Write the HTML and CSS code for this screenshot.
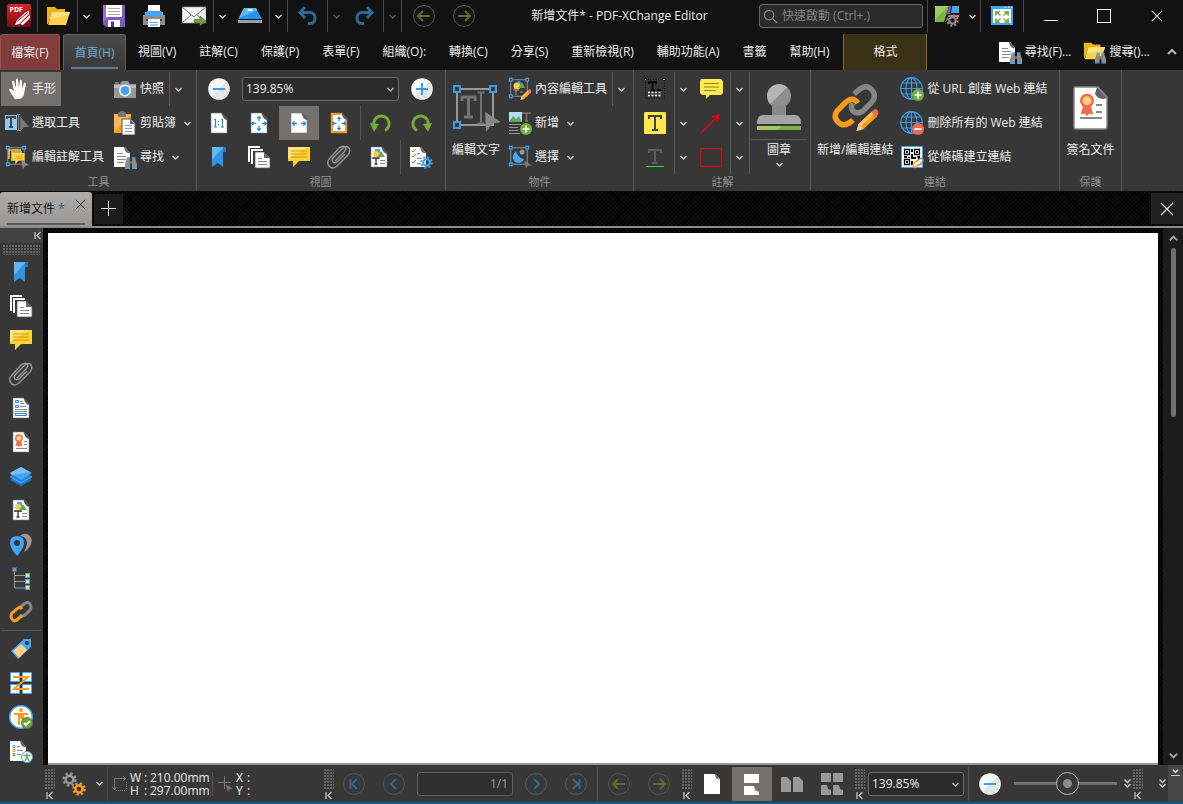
FILE: index.html
```html
<!DOCTYPE html>
<html lang="zh-Hant">
<head>
<meta charset="utf-8">
<title>新增文件* - PDF-XChange Editor</title>
<link rel="stylesheet" href="styles.css">
</head>
<body>
<svg class="defs" aria-hidden="true">
  <defs>
    <linearGradient id="g-red" x1="0" y1="0" x2="0" y2="1"><stop offset="0" stop-color="#d8262b"/><stop offset="1" stop-color="#7a0c10"/></linearGradient>
    <linearGradient id="g-gray" x1="0" y1="0" x2="1" y2="1"><stop offset=".5" stop-color="#b5b5b5"/><stop offset=".5" stop-color="#8f8f8f"/></linearGradient>
  </defs>
  <symbol id="chev" viewBox="0 0 9 9"><path d="M1.500 3l3 3 3-3" fill="none" stroke="currentColor" stroke-width="1.500"/></symbol>
  <symbol id="dchev" viewBox="0 0 9 11"><path d="M1.500 1.500l3 3 3-3M1.500 6l3 3 3-3" fill="none" stroke="#ccc" stroke-width="1.500"/></symbol>
  <symbol id="collapse" viewBox="0 0 9 9"><path d="M2 1v7M7.500 1L4 4.500 7.500 8M4 4.500h1" fill="none" stroke="#c4c4c4" stroke-width="1.300"/></symbol>
  <symbol id="doc" viewBox="0 0 24 24"><path d="M4 2h11l5 6v14H4z" fill="#fff" stroke="#777" stroke-width=".6"/><path d="M14.500 2h1l5 6v1c-3 0-5-3-6-7z" fill="#555"/></symbol>
  <symbol id="logo" viewBox="0 0 24 24"><rect width="24" height="23" rx="2" fill="url(#g-red)"/><text x="2.500" y="8" class="logo-text">PDF</text><path d="M8 21l2-5L19 8l3-1v3L12 20zM13 20L23 11v3l-7 7z" fill="#fff"/><path d="M10 17.500l11-9" stroke="#a0161a"/></symbol>
  <symbol id="folder" viewBox="0 0 24 24"><path d="M1 3h8l2 2h8v4H6L2 20H1z" fill="#e9b21e"/><path d="M6 8h18l-4 13H2z" fill="#ffd04a"/><path d="M6 8h18l-1 3L4 15z" fill="#ffe07a"/></symbol>
  <symbol id="save" viewBox="0 0 24 24"><path d="M1 1h22v22H4l-3-3z" fill="#7e57c2"/><path d="M1 1h22L1 18z" fill="#9575cd"/><path d="M4 1h16v12H4z" fill="#fff"/><path d="M6 4.500h12M6 7.500h12M6 10.500h12" stroke="#aaa" stroke-width="1.200"/><path d="M6 16h12v7H6z" fill="#fff"/><path d="M9 17.500h3V23H9z" fill="#512da8"/></symbol>
  <symbol id="print" viewBox="0 0 24 24"><path d="M1 11h22v10H1z" fill="#8d8d8d"/><path d="M6 1h12v8H6z" fill="#fff"/><path d="M3 8h18v4H3z" fill="#aaa"/><path d="M5 7h14l2 5H3z" fill="#42a5f5"/><path d="M4 15h16v2H4z" fill="#444"/><path d="M6 15h12v8H6z" fill="#fff"/><path d="M8 18.500h8M8 21h8" stroke="#42a5f5"/></symbol>
  <symbol id="mail" viewBox="0 0 24 24"><path d="M0 3h24v16H0z" fill="#f4f4f4" stroke="#999" stroke-width=".7"/><path d="M0 3l12 10L24 3M0 19l9-8M24 19l-9-8" stroke="#777" fill="none"/><path d="M12 15.500h6V12l6 5-6 5v-3.500h-6z" fill="#6ba534" stroke="#444" stroke-width=".5"/></symbol>
  <symbol id="scan" viewBox="0 0 24 24"><path d="M6 4h12l6 11H0z" fill="#2196f3"/><path d="M6 4h12l1 2L1 14z" fill="#64b5f6"/><path d="M10 5h4l1 2H9z" fill="#e3f2fd"/><path d="M0 16h24v3H0z" fill="#9e9e9e"/></symbol>
  <symbol id="undo" viewBox="0 0 24 24"><path d="M9 3L4 8.500 9 14M5 8.500h9a5 5 0 0 1 5 5q0 6-5 6h-2" fill="none" stroke="#2d6898" stroke-width="3"/></symbol>
  <symbol id="back" viewBox="0 0 24 24"><circle cx="12" cy="12" r="10.500" fill="none" stroke="#555"/><path d="M11 7l-5 5 5 5M6 12h12" fill="none" stroke="#55722f" stroke-width="2"/></symbol>
  <symbol id="first" viewBox="0 0 24 24"><circle cx="12" cy="12" r="10.500" fill="none" stroke="#555"/><path d="M15 7l-5 5 5 5M8.500 7v10" fill="none" stroke="#39658d" stroke-width="2"/></symbol>
  <symbol id="prev" viewBox="0 0 24 24"><circle cx="12" cy="12" r="10.500" fill="none" stroke="#555"/><path d="M14 7l-5 5 5 5" fill="none" stroke="#39658d" stroke-width="2"/></symbol>
  <symbol id="glass" viewBox="0 0 16 16"><circle cx="6.500" cy="6.500" r="5" fill="none" stroke="#888" stroke-width="1.300"/><path d="M10 10l5 5" stroke="#888" stroke-width="1.500"/></symbol>
  <symbol id="gear" viewBox="0 0 24 24"><circle cx="12" cy="12" r="6" fill="none" stroke="currentColor" stroke-width="4"/><circle cx="12" cy="12" r="9.500" fill="none" stroke="currentColor" stroke-width="4" stroke-dasharray="3.730 3.730"/></symbol>
  <symbol id="theme" viewBox="0 0 24 24"><path d="M0 2h14L9 18H0z" fill="#7cb342"/><path d="M0 2h13L0 16z" fill="#9ccc65"/><path d="M14 2h2l-1 8h-3z" fill="#7e57c2"/><path d="M17 2h7v7h-8z" fill="#42a5f5"/><path d="M14 11h10v2H13l-2 5h-1z" fill="#ff7043"/><use href="#gear" x="11" y="10" width="13" height="13" color="#8a8a8a"/></symbol>
  <symbol id="full" viewBox="0 0 24 24"><path d="M2 3h20v17H2z" fill="#fff" stroke="#42a5f5" stroke-width="2"/><path d="M1 2h22v3H1z" fill="#42a5f5"/><path d="M15 3.500h1M18 3.500h1M21 3.500h1" stroke="#fff"/><path d="M5 7h5L9 9l2 2-1 1-2-2-3 2zM19 7h-5l1 2-2 2 1 1 2-2 3 2zM5 19h5l-1-2 2-2-1-1-2 2-3-2zM19 19h-5l1-2-2-2 1-1 2 2 3-2z" fill="#7cb342"/></symbol>
  <symbol id="bino" viewBox="0 0 12 12"><path d="M1 4l1-3h3v10H0V7zM11 4l-1-3H7v10h5V7z" fill="#8d8d8d"/><path d="M5 4h2v3H5z" fill="#666"/><path d="M1.500 1H5M7 1h3.500M0 11.300h5M7 11.300h5" stroke="#42a5f5" stroke-width="1.400"/></symbol>
  <symbol id="find" viewBox="0 0 24 24"><path d="M1 2h11l5 6v14H1z" fill="#fff"/><path d="M11 2h1l5 6c-3 1-5-1-6-6z" fill="#666"/><path d="M4 8.500h6M4 11.500h9M4 14.500h9M4 17.500h7" stroke="#888"/><use href="#bino" x="12" y="12" width="12" height="12"/></symbol>
  <symbol id="search" viewBox="0 0 24 24"><use href="#folder" width="24" height="22"/><use href="#bino" x="13" y="12" width="11" height="12"/></symbol>
  <symbol id="hand" viewBox="0 0 24 24"><path d="M10 22Q7 18 4 13q0-2 2-1l3 2L7 5q0-2 2-1l2 7V2q1-1 2 0l1 9 1-8q1-1 2 1v8l2-6q1-1 2 1l-2 10q-1 5-6 5z" fill="#fff"/></symbol>
  <symbol id="seltext" viewBox="0 0 24 24"><path d="M0 4h12v15H0z" fill="#90caf9"/><path d="M2 8V6h8v2M6 6v10M4 16h4" stroke="#444" stroke-width="2" fill="none"/><path d="M12 3.500h3M12 19.500h3M13.500 4v15" stroke="#888"/><path d="M15 5l9 11h-5l-4 5z" fill="#777"/></symbol>
  <symbol id="bubble" viewBox="0 0 24 24"><path d="M1 2h22v14H12l-6 6v-6H1z" fill="#fdd13d"/><path d="M1 2h20L1 14z" fill="#ffe17a"/><path d="M4 6h16M4 9h16M4 12h16" stroke="#d69a00"/></symbol>
  <symbol id="frame" viewBox="0 0 24 24"><path d="M3 3h18v18H3z" fill="none" stroke="#999"/><path d="M1.500 1.500h3v3h-3zM19.500 1.500h3v3h-3zM1.500 19.500h3v3h-3z" fill="#333" stroke="#42a5f5" stroke-width="1.200"/></symbol>
  <symbol id="selnote" viewBox="0 0 24 24"><use href="#frame" width="22" height="22"/><path d="M4 14V5h12M7 16V7h10" fill="none" stroke="#fdd13d" stroke-width="1.500"/><use href="#bubble" x="7" y="7" width="13" height="13"/><path d="M16 15l8 5-4 1-2 3z" fill="#888"/></symbol>
  <symbol id="camera" viewBox="0 0 24 24"><path d="M1 7h6l2-3h6l2 3h6v14H1z" fill="#999"/><path d="M1 8h22v3H1z" fill="#bbb"/><path d="M2 5h4v2H2z" fill="#777"/><circle cx="12" cy="13.500" r="6" fill="#fff"/><circle cx="12" cy="13.500" r="4.500" fill="#42a5f5"/></symbol>
  <symbol id="paste" viewBox="0 0 24 24"><path d="M1 3h17v19H1z" fill="#ffb74d"/><path d="M1 21L18 4v18H1z" fill="#fb9a1b"/><path d="M5 2q4-4 8 0v4H5z" fill="#777"/><path d="M9 8h9l4 4v12H9z" fill="#fff" stroke="#555"/><path d="M17 8l5 5h-5z" fill="#666"/><path d="M12 14.500h7M12 17.500h7M12 20.500h7" stroke="#999"/></symbol>
  <symbol id="minus" viewBox="0 0 24 24"><circle cx="12" cy="12" r="10.800" fill="#f7f7f7"/><path d="M19.600 4.400A10.800 10.800 0 0 1 4.400 19.600z" fill="#e6e6e6"/><path d="M6 12h12" stroke="#2196f3" stroke-width="1.800"/></symbol>
  <symbol id="plus" viewBox="0 0 24 24"><use href="#minus" width="24" height="24"/><path d="M12 6v12" stroke="#2196f3" stroke-width="1.800"/></symbol>
  <symbol id="actual" viewBox="0 0 24 24"><use href="#doc" width="24" height="24"/><path d="M7 9l1.500-1v8M7 16h3M14 9l1.500-1v8M14 16h3M11.500 10v1M11.500 13v1" fill="none" stroke="#2389d8"/></symbol>
  <symbol id="arrows" viewBox="0 0 24 24"><path d="M12 5v5M12 15v5M4 12.500h5M15 12.500h5M10 7l2-2 2 2M10 18l2 2 2-2M6 10.500l-2 2 2 2M18 10.500l2 2-2 2" fill="none" stroke="#2389d8" stroke-width="1.400"/></symbol>
  <symbol id="fitpage" viewBox="0 0 24 24"><use href="#doc" width="24" height="24"/><use href="#arrows" x="1" y="1" width="22" height="22"/></symbol>
  <symbol id="fitwidth" viewBox="0 0 24 24"><use href="#doc" width="24" height="24"/><path d="M6 12.500h4M14 12.500h4M7.500 10.500l-2 2 2 2M16.500 10.500l2 2-2 2" fill="none" stroke="#2389d8" stroke-width="1.400"/></symbol>
  <symbol id="fitvis" viewBox="0 0 24 24"><use href="#doc" width="24" height="24"/><path d="M5.500 3h9M5 3v18h14V9" fill="none" stroke="#fb9a1b" stroke-width="2"/><use href="#arrows" x="2" y="2" width="20" height="20"/></symbol>
  <symbol id="rotate" viewBox="0 0 24 24"><path d="M16 19.500A7.700 7.700 0 1 0 5 15" fill="none" stroke="#76a83a" stroke-width="3"/><path d="M1 12l9 1-5 8z" fill="#76a83a"/></symbol>
  <symbol id="mark" viewBox="0 0 24 24"><path d="M5 2h14v5h-3v15l-5-4-6 4z" fill="#2f93e8"/><path d="M5 2h12L5 15z" fill="#64b5f6"/><path d="M16 2h3v5h-3z" fill="#1f7ccc"/></symbol>
  <symbol id="pages" viewBox="0 0 24 24"><path d="M2 17V2h11M5 19V5h11" fill="none" stroke="#fff" stroke-width="2"/><path d="M8 7h9l6 6v10H8z" fill="#fff" stroke="#555" stroke-width=".7"/><path d="M17 7l6 6h-6z" fill="#666"/><path d="M11 13.500h4M11 16.500h9M11 19.500h9" stroke="#888"/></symbol>
  <symbol id="clip" viewBox="0 0 24 24"><path d="M8 16L17 7q3-3 1-5t-6 1L3 13q-4 4-1 8t8 0L21 10q3-4 1-7t-6 0L7 12q-3 3-1 5t5-1l7-7" fill="none" stroke="#999" stroke-width="1.400"/></symbol>
  <symbol id="content" viewBox="0 0 24 24"><use href="#doc" width="24" height="24"/><path d="M8 4h5v4H8z" fill="#42a5f5"/><circle cx="9" cy="9" r="3" fill="#fdd13d"/><path d="M14 6l4 6h-8z" fill="#66a957"/><path d="M6 14v-1h6v1M9 13v6M7.500 19h3" fill="none" stroke="#333" stroke-width="1.300"/><path d="M13 15.500h5M13 18.500h5" stroke="#888"/></symbol>
  <symbol id="options" viewBox="0 0 24 24"><path d="M1 2h11l5 6v14H1z" fill="#fff"/><path d="M11 2h1l5 6c-3 1-5-1-6-6z" fill="#666"/><path d="M3 6l1 1 3-3M3 11l1 1 3-3M3 17l1 1 3-3" stroke="#ff5722" fill="none"/><path d="M8 8.500h3M8 13.500h5M8 18.500h4" stroke="#888"/><use href="#gear" x="11" y="11" width="13" height="13" color="#42a5f5"/></symbol>
  <symbol id="cursor" viewBox="0 0 12 12"><path d="M0 0l12 7-6 1-3 4z" fill="#777"/></symbol>
  <symbol id="edittext" viewBox="0 0 48 48"><path d="M5 5h36v36H5z" fill="none" stroke="#999" stroke-width="2"/><path d="M2 2h6v6H2zM38 2h6v6h-6zM2 38h6v6H2z" fill="#373737" stroke="#3d9be9" stroke-width="2"/><path d="M10 17v-4h13v4M16.500 13v20M12 33h9" fill="none" stroke="#747474" stroke-width="3"/><path d="M25.500 8.500h7M29 8.500v31M25.500 39.500h7" fill="none" stroke="#747474" stroke-width="2"/><path d="M33 28l16 10-9 2-6 8z" fill="#888"/></symbol>
  <symbol id="pencil" viewBox="0 0 24 24"><path d="M1 23l2-7L17 3l5 5L8 21z" fill="#fb9a1b"/><path d="M3 16L17 3l2 2L5 19z" fill="#ffc15a"/><path d="M16 4l3-3q4 0 4 5l-3 3z" fill="#f0645a"/><path d="M1 23l2-7 5 5z" fill="#e5c8a5"/></symbol>
  <symbol id="editcontent" viewBox="0 0 24 24"><use href="#frame" width="22" height="22"/><circle cx="9" cy="9" r="3.500" fill="#fdd13d"/><path d="M8 5l4-1 1 4z" fill="#42a5f5"/><path d="M14 5l3 6h-7z" fill="#66a957"/><path d="M5 13h6M8 13v5M12 15h3" stroke="#999"/><use href="#pencil" x="12" y="11" width="12" height="13"/></symbol>
  <symbol id="add" viewBox="0 0 12 12"><circle cx="6" cy="6" r="6" fill="#76ad3a"/><path d="M6 2.500v7M2.500 6h7" stroke="#fff" stroke-width="1.700"/></symbol>
  <symbol id="addobj" viewBox="0 0 24 24"><path d="M1 1h13v10H1z" fill="#b8ddf5"/><path d="M1 11l4-6 3 3 3-3 3 6z" fill="#66a957"/><path d="M15 3V2h7v1M18.500 2v8M17 10h3" stroke="#777" stroke-width="1.500" fill="none"/><path d="M1 13.500h12M1 16.500h9M1 19.500h9M1 22.500h11" stroke="#999"/><use href="#add" x="12" y="12" width="12" height="12"/></symbol>
  <symbol id="selobj" viewBox="0 0 24 24"><use href="#frame" width="22" height="22"/><circle cx="14" cy="7" r="2.500" fill="#999"/><path d="M8 6q-6 6-1 11 6 3 9-3-6-1-8-8z" fill="#42a5f5"/><use href="#cursor" x="16" y="15" width="8" height="9"/></symbol>
  <symbol id="typew" viewBox="0 0 24 24"><rect x="2.500" y="2.500" width="19" height="19" fill="none" stroke="#111" stroke-dasharray="1 1.500"/><circle cx="2.500" cy="2.500" r="1.200" fill="#fff" stroke="#000"/><circle cx="21" cy="2.500" r="1.200" fill="#fff" stroke="#000"/><path d="M6 7V5h7v2M9.500 5v8M8 13h4M14 13h4" fill="none" stroke="#000" stroke-width="1.700"/><path d="M5 15.500h14M5 18.500h14" stroke="#fff" stroke-width="1.500" stroke-dasharray="2 1.500"/></symbol>
  <symbol id="high" viewBox="0 0 24 24"><rect x="1" y="1" width="22" height="22" rx="1" fill="#ffe94d"/><path d="M6 8V5h12v3M12 5v14M9 19h6" stroke="#444" stroke-width="2" fill="none"/></symbol>
  <symbol id="under" viewBox="0 0 24 24"><path d="M6 8V5h12v3M12 5v13M9 18h6" stroke="#5c5c5c" stroke-width="2" fill="none"/><path d="M3 21.500h18" stroke="#0f2"/></symbol>
  <symbol id="sticky" viewBox="0 0 24 24"><path d="M2 2h20l2 2v12l-2 2H11l-4 4v-4H3l-2-2V4z" fill="#ffe94d"/><path d="M5 6.500h15M5 10h15M5 13.500h12" stroke="#8b8125"/></symbol>
  <symbol id="arrow" viewBox="0 0 24 24"><path d="M2 22L20 4M13 6l7-2-2 7" fill="none" stroke="#f00000" stroke-width="1.500"/></symbol>
  <symbol id="rect" viewBox="0 0 24 24"><rect x="1.500" y="3.500" width="21" height="18" fill="none" stroke="#f00000"/></symbol>
  <symbol id="stamp" viewBox="0 0 48 48"><circle cx="24" cy="12" r="12" fill="url(#g-gray)"/><path d="M17 22h14v10h9q6 0 6 8H2q0-8 6-8h9z" fill="#898989"/><path d="M8 31h32q6 0 6 9H2q0-9 6-9z" fill="#a4a4a4"/><path d="M2 42h44v4H2z" fill="#7cb342"/><path d="M2 42h25l-5 4H2z" fill="#9ccc65"/></symbol>
  <symbol id="link" viewBox="0 0 24 24"><g fill="none" stroke-width="3"><path d="M10 8l5-4q4-3 6 0t0 6l-5 5q-3 2-5 0" stroke="#888"/><path d="M8 20q-3 2-5-1t0-6l5-4q3-3 5 0" stroke="#fb9a1b"/><path d="M7 20.500l6-5" stroke="#fb9a1b"/></g></symbol>
  <symbol id="editlink" viewBox="0 0 48 48"><g fill="none" stroke-width="5.500"><path d="M23 10l6-5q7-5 12 1t0 12l-9 9q-6 4-10 0-3-4 0-8" stroke="#858585"/><path d="M18 39q-6 4-11-1t-1-11l9-9q7-6 12 1" stroke="#fb9a1b"/><path d="M14 41q5-2 8-5" stroke="#fb9a1b"/></g><use href="#pencil" x="24" y="24" width="25" height="24"/></symbol>
  <symbol id="globe" viewBox="0 0 24 24"><g fill="none" stroke="#3d9be9" stroke-width="1.200"><circle cx="11.500" cy="11.500" r="10.800"/><ellipse cx="11.500" cy="11.500" rx="5.500" ry="10.800"/><path d="M11.500 1v21M1 11.500h21M3 6h17M3 17h17"/></g></symbol>
  <symbol id="globeadd" viewBox="0 0 24 24"><use href="#globe" width="24" height="24"/><use href="#add" x="12" y="12" width="12" height="12"/></symbol>
  <symbol id="globedel" viewBox="0 0 24 24"><use href="#globe" width="24" height="24"/><circle cx="18" cy="18" r="6" fill="#f4694a"/><path d="M14.500 18h7" stroke="#fff" stroke-width="2"/></symbol>
  <symbol id="qr" viewBox="0 0 24 24"><path d="M1.500 1.500h21v21h-21z" fill="#fff" stroke="#42a5f5"/><path d="M4.500 4.500h5v5h-5zM14.500 4.500h5v5h-5zM4.500 14.500h5v5h-5z" fill="none" stroke="#000" stroke-width="1.300"/><path d="M6 6h2v2H6zM16 6h2v2h-2zM6 16h2v2H6zM11 4h2v3h-2zM11 9h2v3h3v2h-5zM4 11h3v2H4zM8 12h2v1H8zM17 11h3v3h-2zM11 16h2v4h-2z"/><use href="#link" x="12" y="12" width="12" height="12"/></symbol>
  <symbol id="ribbonmark" viewBox="0 0 12 18"><path d="M3 10l-2 7 3-1 2 2V11v7l2-2 3 1-2-7z" fill="#f4694a"/><circle cx="6" cy="6" r="4.500" fill="#ffd27a" stroke="#f4694a" stroke-width="2"/></symbol>
  <symbol id="sign" viewBox="0 0 48 48"><path d="M8 3h23l9 10v30q0 2-2 2H9q-2 0-2-2V5q0-2 1-2z" fill="#fff" stroke="#888" stroke-width="1.500"/><path d="M30 3l10 11q-8 3-12-4z" fill="#616161"/><use href="#ribbonmark" x="11" y="9" width="18" height="23"/><path d="M29 21h6M29 28h6M13 34h22" stroke="#888" stroke-width="2"/></symbol>
  <symbol id="fields" viewBox="0 0 24 24"><use href="#doc" width="24" height="24"/><path d="M6.500 4.500h3v2h-3zM6.500 9.500h3v2h-3zM6.500 17.500h11v2h-11z" fill="none" stroke="#2389d8"/><path d="M11 5.500h3M11 7.500h4M11 10.500h6M6 13.500h12M6 15.500h12" stroke="#888"/></symbol>
  <symbol id="sigs" viewBox="0 0 24 24"><use href="#doc" width="24" height="24"/><use href="#ribbonmark" x="5" y="4" width="10" height="13"/><path d="M15 11.500h3M15 14.500h3M7 18.500h11" stroke="#888"/></symbol>
  <symbol id="layers" viewBox="0 0 24 24"><path d="M1 16l11-7 11 7-11 6z" fill="#1976d2"/><path d="M1 13l11-7 11 7-11 6z" fill="#2389e0" stroke="#90caf9" stroke-width=".5"/><path d="M1 9l11-6 11 6-11 7z" fill="#42a5f5"/><path d="M1 9l11-6 9 5-18 3z" fill="#78bff7"/></symbol>
  <symbol id="pins" viewBox="0 0 24 24"><path d="M11 4q4-4 9-1 5 4 1 11-2 4-6 6 3-6 3-9 0-6-7-7z" fill="#999"/><path d="M1 11q0-7 7-7t7 7q0 5-7 13Q1 16 1 11z" fill="#42a5f5"/><circle cx="8" cy="11" r="3" fill="#373737"/></symbol>
  <symbol id="tree" viewBox="0 0 24 24"><path d="M5.500 4v18h12M5.500 9.500h12M5.500 15.500h12" fill="none" stroke="#999"/><path d="M3.500 1.500h4v4h-4z" fill="#f4694a" stroke="#1976d2"/><path d="M16.500 7.500h4v4h-4zM16.500 13.500h4v4h-4zM16.500 19.500h4v4h-4z" fill="#ffe04d" stroke="#42a5f5"/></symbol>
  <symbol id="tag" viewBox="0 0 24 24"><path d="M2 14L15 2h7v8L9 22z" fill="#42a5f5"/><path d="M4 14l8-7 6 6-8 8z" fill="#ffd08a"/><circle cx="18" cy="6" r="2" fill="#333"/></symbol>
  <symbol id="order" viewBox="0 0 24 24"><path d="M1.500 1.500h9v9h-9zM13.500 1.500h9v9h-9zM1.500 13.500h9v9h-9zM13.500 13.500h9v9h-9z" fill="#fff" stroke="#42a5f5"/><path d="M4 6h15L5 18h15" fill="none" stroke="#fb9a1b" stroke-width="2"/></symbol>
  <symbol id="access" viewBox="0 0 24 24"><circle cx="12" cy="12" r="11.300" fill="#fff" stroke="#42a5f5" stroke-width="1.400"/><circle cx="12" cy="5" r="2" fill="#fb9a1b"/><path d="M5 9h14M12 9v5M10 9v11M14 9v7" stroke="#fb9a1b" stroke-width="2"/><circle cx="18" cy="18" r="5.700" fill="#6ba534" stroke="#555" stroke-width=".6"/><path d="M15 18l2 2 4-4" fill="none" stroke="#fff" stroke-width="1.800"/></symbol>
  <symbol id="report" viewBox="0 0 24 24"><path d="M1 2h11l5 6v14H1z" fill="#fff"/><path d="M11 2h1l5 6c-3 1-5-1-6-6z" fill="#666"/><path d="M4 6.500h2v2H4z" fill="none" stroke="#42a5f5"/><path d="M4 10.500h2v2H4z" fill="none" stroke="#fb9a1b"/><path d="M4 14.500h2v2H4z" fill="none" stroke="#6ba534"/><path d="M8 7.500h3M8 11.500h6M8 15.500h4" stroke="#888"/><circle cx="18" cy="18" r="5.500" fill="#fff" stroke="#42a5f5"/><path d="M14.500 16.500h7M18 14v4l-2 4M18 18l2 4" stroke="#4caf50" fill="none" stroke-width="1.300"/></symbol>
  <symbol id="gears" viewBox="0 0 24 24"><use href="#gear" width="15" height="15" color="#999"/><use href="#gear" x="10" y="10" width="14" height="14" color="#f9a01b"/></symbol>
  <symbol id="dims" viewBox="0 0 16 16"><path d="M2.500 14V2.500H14M11 .500l3 2-3 2M.500 11l2 3 2-3" fill="none" stroke="#777"/><path d="M4 14.500h10.500V5" fill="none" stroke="#777" stroke-dasharray="1 1"/></symbol>
  <symbol id="cross" viewBox="0 0 16 16"><path d="M6.500 0v13M0 6.500h13" stroke="#777"/><use href="#cursor" x="8" y="8" width="7" height="8"/></symbol>
  <symbol id="l-single" viewBox="0 0 24 24"><path d="M4 2h11l5 5v15H4z" fill="#fff"/><path d="M15 2l5 6-4-2z" fill="#555"/></symbol>
  <symbol id="l-cont" viewBox="0 0 24 24"><path d="M4 2h15v9H4zM4 14h10l1 4 4 2v3H4z" fill="#fff"/></symbol>
  <symbol id="l-two" viewBox="0 0 24 24"><path d="M1 5h6l4 4v11H1zM13 5h6l4 4v11H13z" fill="#999"/></symbol>
  <symbol id="l-grid" viewBox="0 0 24 24"><path d="M1 1h10v9H1zM13 1h10v9H13zM1 13h6l1 4 3 1v5H1zM13 13h6l1 4 3 1v5H13z" fill="#999"/></symbol>
  <symbol id="x" viewBox="0 0 14 14"><path d="M1 1l12 12M13 1L1 13" stroke="currentColor" stroke-width="1.200"/></symbol>
</svg>

<header class="titlebar">
  <span class="tb logo-cell sep"><svg class="i"><use href="#logo"/></svg></span>
  <button class="tb sep" aria-label="開啟"><svg class="i"><use href="#folder"/></svg></button>
  <button class="drop" aria-label="更多開啟"><svg><use href="#chev"/></svg></button>
  <button class="tb" aria-label="儲存"><svg class="i"><use href="#save"/></svg></button>
  <button class="tb" aria-label="列印"><svg class="i"><use href="#print"/></svg></button>
  <button class="tb sep" aria-label="郵件"><svg class="i"><use href="#mail"/></svg></button>
  <button class="drop" aria-label="更多郵件"><svg><use href="#chev"/></svg></button>
  <button class="tb sep" aria-label="掃描"><svg class="i"><use href="#scan"/></svg></button>
  <button class="drop wide sep" aria-label="更多掃描"><svg><use href="#chev"/></svg></button>
  <button class="tb sep" aria-label="復原"><svg class="i"><use href="#undo"/></svg></button>
  <button class="drop dim" aria-label="更多復原"><svg><use href="#chev"/></svg></button>
  <button class="tb sep" aria-label="重做"><svg class="i flip"><use href="#undo"/></svg></button>
  <button class="drop wide dim sep" aria-label="更多重做"><svg><use href="#chev"/></svg></button>
  <div class="history">
    <button class="tb" aria-label="上一檢視"><svg class="i"><use href="#back"/></svg></button>
    <button class="tb" aria-label="下一檢視"><svg class="i flip"><use href="#back"/></svg></button>
  </div>
  <h1 class="title">新增文件* - PDF-XChange Editor</h1>
  <label class="quick"><svg><use href="#glass"/></svg><input type="text" placeholder="快速啟動 (Ctrl+.)" aria-label="快速啟動"></label>
  <button class="tb theme sepl" aria-label="佈景主題"><svg class="i"><use href="#theme"/></svg></button>
  <button class="drop sep" aria-label="更多佈景主題"><svg><use href="#chev"/></svg></button>
  <button class="tb sep full" aria-label="全螢幕"><svg class="i"><use href="#full"/></svg></button>
  <button class="win" aria-label="最小化"><span class="min"></span></button>
  <button class="win" aria-label="最大化"><span class="max"></span></button>
  <button class="win" aria-label="關閉"><svg><use href="#x"/></svg></button>
</header>

<nav class="tabs">
  <button class="tab file">檔案(F)</button>
  <button class="tab home">首頁(H)</button>
  <button class="tab">視圖(V)</button>
  <button class="tab">註解(C)</button>
  <button class="tab">保護(P)</button>
  <button class="tab">表單(F)</button>
  <button class="tab">組織(O):</button>
  <button class="tab">轉換(C)</button>
  <button class="tab">分享(S)</button>
  <button class="tab">重新檢視(R)</button>
  <button class="tab">輔助功能(A)</button>
  <button class="tab">書籤</button>
  <button class="tab">幫助(H)</button>
  <button class="tab format">格式</button>
  <span class="grow"></span>
  <button class="tool"><svg class="i"><use href="#find"/></svg>尋找(F)...</button>
  <button class="tool"><svg class="i"><use href="#search"/></svg>搜尋()...</button>
  <button class="fold" aria-label="收合功能區"><svg><use href="#chev"/></svg></button>
</nav>

<section class="ribbon">
  <div class="group tools">
    <div class="body">
      <div class="col first">
        <button class="item on"><svg class="i"><use href="#hand"/></svg>手形</button>
        <button class="item"><svg class="i"><use href="#seltext"/></svg>選取工具</button>
        <button class="item"><svg class="i"><use href="#selnote"/></svg>編輯註解工具</button>
      </div>
      <div class="col">
        <div class="row"><button class="item sep"><svg class="i"><use href="#camera"/></svg>快照</button><button class="drop" aria-label="更多快照"><svg><use href="#chev"/></svg></button></div>
        <button class="item"><svg class="i"><use href="#paste"/></svg>剪貼簿<svg class="c"><use href="#chev"/></svg></button>
        <button class="item"><svg class="i"><use href="#find"/></svg>尋找<svg class="c"><use href="#chev"/></svg></button>
      </div>
    </div>
    <h2>工具</h2>
  </div>
  <div class="group view">
    <div class="body rows">
      <div class="row">
        <button class="cell" aria-label="縮小"><svg class="i"><use href="#minus"/></svg></button>
        <label class="combo"><select aria-label="縮放"><option>139.85%</option></select><svg><use href="#chev"/></svg></label>
        <button class="cell" aria-label="放大"><svg class="i"><use href="#plus"/></svg></button>
      </div>
      <div class="row">
        <button class="cell" aria-label="實際大小"><svg class="i"><use href="#actual"/></svg></button>
        <button class="cell" aria-label="整頁"><svg class="i"><use href="#fitpage"/></svg></button>
        <button class="cell on" aria-label="頁寬"><svg class="i"><use href="#fitwidth"/></svg></button>
        <button class="cell" aria-label="可見內容"><svg class="i"><use href="#fitvis"/></svg></button>
        <span class="bar"></span>
        <button class="cell" aria-label="逆時針"><svg class="i"><use href="#rotate"/></svg></button>
        <button class="cell" aria-label="順時針"><svg class="i flip"><use href="#rotate"/></svg></button>
      </div>
      <div class="row">
        <button class="cell" aria-label="書籤"><svg class="i"><use href="#mark"/></svg></button>
        <button class="cell" aria-label="縮圖"><svg class="i"><use href="#pages"/></svg></button>
        <button class="cell" aria-label="註解"><svg class="i"><use href="#bubble"/></svg></button>
        <button class="cell" aria-label="附件"><svg class="i"><use href="#clip"/></svg></button>
        <button class="cell" aria-label="內容"><svg class="i"><use href="#content"/></svg></button>
        <span class="bar"></span>
        <button class="cell" aria-label="選項"><svg class="i"><use href="#options"/></svg></button>
      </div>
    </div>
    <h2>視圖</h2>
  </div>
  <div class="group objects">
    <div class="body">
      <button class="big"><svg class="b"><use href="#edittext"/></svg>編輯文字</button>
      <div class="col">
        <div class="row"><button class="item sep"><svg class="i"><use href="#editcontent"/></svg>內容編輯工具</button><button class="drop" aria-label="更多內容編輯"><svg><use href="#chev"/></svg></button></div>
        <button class="item"><svg class="i"><use href="#addobj"/></svg>新增<svg class="c"><use href="#chev"/></svg></button>
        <button class="item"><svg class="i"><use href="#selobj"/></svg>選擇<svg class="c"><use href="#chev"/></svg></button>
      </div>
    </div>
    <h2>物件</h2>
  </div>
  <div class="group notes">
    <div class="body">
      <div class="col">
        <div class="row"><button class="cell sep" aria-label="打字機"><svg class="i"><use href="#typew"/></svg></button><button class="drop" aria-label="更多打字機"><svg><use href="#chev"/></svg></button></div>
        <div class="row"><button class="cell sep" aria-label="螢光標示"><svg class="i"><use href="#high"/></svg></button><button class="drop" aria-label="更多螢光"><svg><use href="#chev"/></svg></button></div>
        <div class="row"><button class="cell sep" aria-label="底線"><svg class="i"><use href="#under"/></svg></button><button class="drop" aria-label="更多底線"><svg><use href="#chev"/></svg></button></div>
      </div>
      <div class="col">
        <div class="row"><button class="cell sep" aria-label="便箋"><svg class="i"><use href="#sticky"/></svg></button><button class="drop" aria-label="更多便箋"><svg><use href="#chev"/></svg></button></div>
        <div class="row"><button class="cell sep" aria-label="箭頭"><svg class="i"><use href="#arrow"/></svg></button><button class="drop" aria-label="更多箭頭"><svg><use href="#chev"/></svg></button></div>
        <div class="row"><button class="cell sep" aria-label="矩形"><svg class="i"><use href="#rect"/></svg></button><button class="drop" aria-label="更多矩形"><svg><use href="#chev"/></svg></button></div>
      </div>
      <span class="bar tall"></span>
      <div class="stamp">
        <button class="stamp-main" aria-label="套用圖章"><svg class="b"><use href="#stamp"/></svg></button>
        <button class="stamp-more">圖章<svg class="c"><use href="#chev"/></svg></button>
      </div>
    </div>
    <h2>註解</h2>
  </div>
  <div class="group links">
    <div class="body">
      <button class="big"><svg class="b"><use href="#editlink"/></svg>新增/編輯連結</button>
      <div class="col">
        <button class="item"><svg class="i"><use href="#globeadd"/></svg>從 URL 創建 Web 連結</button>
        <button class="item"><svg class="i"><use href="#globedel"/></svg>刪除所有的 Web 連結</button>
        <button class="item"><svg class="i"><use href="#qr"/></svg>從條碼建立連結</button>
      </div>
    </div>
    <h2>連結</h2>
  </div>
  <div class="group protect">
    <div class="body"><button class="big"><svg class="b"><use href="#sign"/></svg>簽名文件</button></div>
    <h2>保護</h2>
  </div>
</section>

<div class="doctabs">
  <div class="doctab"><span>新增文件 <b>*</b></span><button aria-label="關閉文件"><svg><use href="#x"/></svg></button></div>
  <button class="newtab" aria-label="新增分頁"></button>
  <span class="grow"></span>
  <button class="closeall" aria-label="關閉"><svg><use href="#x"/></svg></button>
</div>

<main class="work">
  <aside class="side">
    <button class="side-head" aria-label="收合側欄"><svg class="col-i"><use href="#collapse"/></svg></button>
    <div class="dots side-dots"></div>
    <button aria-label="書籤"><svg class="i"><use href="#mark"/></svg></button>
    <button aria-label="縮圖"><svg class="i"><use href="#pages"/></svg></button>
    <button aria-label="註解"><svg class="i"><use href="#bubble"/></svg></button>
    <button aria-label="附件"><svg class="i"><use href="#clip"/></svg></button>
    <button aria-label="欄位"><svg class="i"><use href="#fields"/></svg></button>
    <button aria-label="簽名"><svg class="i"><use href="#sigs"/></svg></button>
    <button aria-label="圖層"><svg class="i"><use href="#layers"/></svg></button>
    <button aria-label="內容"><svg class="i"><use href="#content"/></svg></button>
    <button aria-label="目的地"><svg class="i"><use href="#pins"/></svg></button>
    <button aria-label="結構"><svg class="i"><use href="#tree"/></svg></button>
    <button aria-label="連結"><svg class="i"><use href="#link"/></svg></button>
    <hr>
    <button aria-label="標籤"><svg class="i"><use href="#tag"/></svg></button>
    <button aria-label="順序"><svg class="i"><use href="#order"/></svg></button>
    <button aria-label="輔助功能檢查"><svg class="i"><use href="#access"/></svg></button>
    <button aria-label="輔助功能報告"><svg class="i"><use href="#report"/></svg></button>
  </aside>
  <div class="right">
    <div class="canvas">
      <div class="page"></div>
      <div class="scroll">
        <button class="up" aria-label="向上"><svg><use href="#chev"/></svg></button>
        <div class="track"><div class="thumb"></div></div>
        <button aria-label="向下"><svg><use href="#chev"/></svg></button>
      </div>
    </div>
    <footer class="status">
      <div class="part info">
        <span class="grip"><span class="dots"></span><svg class="col-i"><use href="#collapse"/></svg></span>
        <button class="gears" aria-label="設定"><svg class="i"><use href="#gears"/></svg></button>
        <button class="drop sep" aria-label="更多設定"><svg><use href="#chev"/></svg></button>
        <svg class="small"><use href="#dims"/></svg>
        <div class="size"><span>W</span><span>:</span><span>210.00mm</span><span>H</span><span>:</span><span>297.00mm</span></div>
        <span class="bar short"></span>
        <svg class="small"><use href="#cross"/></svg>
        <div class="pos"><span>X</span><span>:</span><span>Y</span><span>:</span></div>
      </div>
      <div class="part nav">
        <span class="grip"><span class="dots"></span><svg class="col-i"><use href="#collapse"/></svg></span>
        <button class="cell" aria-label="第一頁"><svg class="i"><use href="#first"/></svg></button>
        <button class="cell" aria-label="上一頁"><svg class="i"><use href="#prev"/></svg></button>
        <input class="pageno" type="text" value="1/1" aria-label="頁碼">
        <button class="cell" aria-label="下一頁"><svg class="i flip"><use href="#prev"/></svg></button>
        <button class="cell" aria-label="最後一頁"><svg class="i flip"><use href="#first"/></svg></button>
        <span class="bar"></span>
        <button class="cell" aria-label="上一檢視"><svg class="i"><use href="#back"/></svg></button>
        <button class="cell" aria-label="下一檢視"><svg class="i flip"><use href="#back"/></svg></button>
      </div>
      <div class="part layout">
        <span class="grip"><span class="dots"></span><svg class="col-i"><use href="#collapse"/></svg></span>
        <button class="cell" aria-label="單頁"><svg class="i"><use href="#l-single"/></svg></button>
        <button class="cell on" aria-label="連續"><svg class="i"><use href="#l-cont"/></svg></button>
        <button class="cell" aria-label="雙頁"><svg class="i"><use href="#l-two"/></svg></button>
        <button class="cell" aria-label="雙頁連續"><svg class="i"><use href="#l-grid"/></svg></button>
      </div>
      <div class="part zoom">
        <span class="grip"><span class="dots"></span><svg class="col-i"><use href="#collapse"/></svg></span>
        <label class="combo"><select aria-label="縮放比例"><option>139.85%</option></select><svg><use href="#chev"/></svg></label>
        <span class="bar"></span>
        <button class="cell" aria-label="縮小"><svg class="i"><use href="#minus"/></svg></button>
        <input class="slider" type="range" min="0" max="100" value="53" aria-label="縮放滑桿">
        <button class="more" aria-label="更多"><svg><use href="#dchev"/></svg></button>
      </div>
      <div class="part last">
        <span class="grip"><span class="dots"></span><svg class="col-i"><use href="#collapse"/></svg></span>
        <button class="more" aria-label="更多工具"><svg><use href="#dchev"/></svg></button>
      </div>
      <button class="corner" aria-label="選項"><svg><use href="#chev"/></svg></button>
    </footer>
  </div>
</main>
</body>
</html>
```
FILE: styles.css
```css
* { box-sizing: border-box; }
body {
  margin: 0;
  min-height: 100vh;
  display: flex;
  flex-direction: column;
  background: #121212;
  color: #ececec;
  font: 12px/16px "Open Sans", "Noto Sans CJK TC", sans-serif;
  border-bottom: 2px solid #0b5c94;
}
.defs { position: absolute; width: 0; height: 0; }
button {
  display: flex;
  align-items: center;
  justify-content: center;
  margin: 0;
  padding: 0;
  border: 0;
  background: none;
  color: inherit;
  font: inherit;
  white-space: nowrap;
}
svg { display: block; flex: none; overflow: visible; }
.i { width: 24px; height: 24px; }
.b { width: 48px; height: 48px; }
.c { width: 9px; height: 9px; margin-left: 4px; color: #c8c8c8; }
.flip { transform: scaleX(-1); }
.logo-text { font: bold 7px "Open Sans", sans-serif; fill: #fff; }
.grow { flex: 1; }
.sep { border-right: 1px solid #4a4a4a; }
.sepl { border-left: 1px solid #4a4a4a; }
.row { display: flex; height: 34px; align-items: center; }
.cell { width: 40px; height: 34px; flex: none; }
.on { background: #73706d; }
.bar { width: 1px; height: 34px; margin: 0 1px; flex: none; background: #585858; }
.drop { width: 16px; height: 32px; flex: none; color: #c8c8c8; }
.drop.wide { width: 18px; }
.drop.dim { color: #555; }
.drop svg { width: 9px; height: 9px; }

.titlebar { display: flex; height: 34px; align-items: flex-start; }
.tb { display: flex; align-items: center; justify-content: center; width: 40px; height: 32px; flex: none; }
.logo-cell { width: 38px; }
.history { display: flex; padding-left: 2px; }
.title { flex: 1; margin: 0; padding-right: 4px; font-size: 12px; font-weight: 400; line-height: 32px; text-align: center; white-space: nowrap; }
.quick {
  display: flex;
  align-items: center;
  gap: 4px;
  width: 164px;
  height: 24px;
  margin: 4px 4px 0 0;
  padding: 0 3px;
  border: 1px solid #696969;
  border-radius: 3px;
  background: #2b2b2b;
}
.quick svg { width: 15px; height: 15px; }
.quick input { flex: 1; min-width: 0; padding: 0; border: 0; background: none; color: #eee; font: inherit; }
.quick input::placeholder { color: #858585; }
.theme { width: 38px; }
.full { width: 43px; }
.win { width: 53px; height: 32px; }
.win svg { width: 12px; height: 12px; }
.min { width: 14px; height: 1px; margin-top: 9px; background: #eee; }
.max { width: 14px; height: 14px; border: 1px solid #eee; }

.tabs { display: flex; height: 36px; align-items: stretch; gap: 1px; }
.tab { padding: 0 11px; }
.file { width: 60px; margin-right: 2px; border-radius: 3px 3px 0 0; border: 1px solid #985050; border-bottom: 0; background: #833c3c; }
.home { width: 63px; border-radius: 3px 3px 0 0; border: 1px solid #606060; border-bottom: 0; background: linear-gradient(#4a4a4a, #383838); color: #72a9d6; position: relative; }
.home::after { content: ""; position: absolute; left: 7px; right: 7px; bottom: 1px; height: 2px; background: #5b7b98; }
.format { width: 84px; margin-left: 2px; border: 1px solid #8b6c20; border-width: 0 1px; background: #3b3117; }
.tool { gap: 3px; margin-right: 10px; }
.fold { width: 22px; }
.fold svg { width: 12px; height: 12px; transform: rotate(180deg); color: #bbb; }

.ribbon { display: flex; height: 121px; background: #373737; }
.group { display: flex; flex-direction: column; border-right: 1px solid #585858; flex: none; }
.group h2 { margin: 0; font-size: 11px; font-weight: 400; line-height: 16px; text-align: center; color: #929292; }
.body { display: flex; height: 104px; padding-top: 2px; }
.rows { flex-direction: column; }
.col { display: flex; flex-direction: column; align-items: flex-start; }
.item { height: 34px; padding: 0 5px 0 4px; gap: 3px; }
.ribbon .sep { border-color: #585858; }
.tools { width: 197px; padding-left: 1px; }
.tools .first { width: 110px; }
.view { width: 249px; padding: 0 3px 0 2px; }
.view .bar { margin-right: 0; }
.combo { position: relative; display: flex; height: 24px; }
.combo select {
  appearance: none;
  width: 100%;
  height: 24px;
  padding: 0 3px;
  border: 1px solid #696969;
  border-radius: 3px;
  background: #2b2b2b;
  color: #ececec;
  font: inherit;
}
.combo svg { position: absolute; right: 4px; top: 8px; width: 9px; height: 9px; color: #b0b0b0; pointer-events: none; }
.view .combo { flex: 1; margin: 0 3px; }
.big { flex-direction: column; justify-content: flex-start; gap: 10px; padding: 12px 6px 0; }
.objects { width: 188px; }
.objects .item { padding-left: 2px; }
.notes { width: 177px; padding-left: 1px; }
.notes .tall { height: 102px; margin: 0 1px 0 2px; }
.stamp { width: 56px; }
.stamp-main { width: 100%; height: 68px; border-bottom: 1px solid #585858; }
.stamp-main .b { margin-top: 4px; }
.stamp-more { width: 100%; flex-direction: column; gap: 2px; padding-top: 2px; }
.stamp-more .c { margin: 0; }
.links { width: 249px; }
.links .item { padding: 0 1px; }
.protect { width: 62px; }
.protect .big { width: 100%; }

.doctabs, .canvas {
  background-color: #0c0c0c;
  background-image: repeating-linear-gradient(45deg, #050505 0 1px, transparent 1px 3px), repeating-linear-gradient(-45deg, #050505 0 1px, transparent 1px 3px);
}
.doctabs { display: flex; height: 37px; align-items: center; border-bottom: 2px solid #8c8b89; }
.doctab {
  position: relative;
  display: flex;
  width: 92px;
  height: 34px;
  align-self: flex-end;
  padding-left: 7px;
  border-radius: 3px 3px 0 0;
  background: linear-gradient(#aeacaa, #989694);
  color: #161616;
  line-height: 34px;
}
.doctab b { color: #28598c; font-weight: 400; }
.doctab::after { content: ""; position: absolute; left: 7px; right: 7px; bottom: 1px; height: 2px; background: #5d5d5d; }
.doctab button { width: 20px; height: 24px; margin-left: auto; margin-right: 2px; }
.doctab svg { width: 11px; height: 11px; }
.newtab { width: 29px; height: 30px; margin-left: 2px; background: linear-gradient(#ddd, #ddd) center / 15px 1px no-repeat, linear-gradient(#ddd, #ddd) center / 1px 15px no-repeat, #1b1b1b; }
.closeall { width: 32px; height: 31px; background: #222; }
.closeall svg { width: 14px; height: 14px; }

.work { display: flex; flex: 1; }
.side { display: flex; flex-direction: column; width: 43px; flex: none; background: #373737; }
.side button { width: 42px; height: 34px; }
.side .side-head { width: 43px; height: 15px; justify-content: flex-end; padding-right: 1px; background: #424242; }
.side hr { width: 40px; height: 1px; margin: 1px; border: 0; background: #585858; }
.col-i { width: 9px; height: 9px; }
.dots { display: block; background: radial-gradient(circle at 1px 1px, #666 0 1px, transparent 1px) 0 0 / 3px 3px; }
.side-dots { height: 10px; margin: 2px 3px 0; }
.right { display: flex; flex: 1; flex-direction: column; min-width: 0; }
.canvas { display: flex; flex: 1; padding: 5px 0 0 5px; }
.page { flex: 1; background: #fff; border-bottom: 2px solid #999; }
.scroll { display: flex; flex-direction: column; width: 20px; margin: -5px 0 0 5px; background: #1c1c1c; color: #aaa; }
.scroll button { width: 20px; height: 20px; }
.scroll svg { width: 11px; height: 11px; }
.scroll .up svg { transform: rotate(180deg); }
.track { flex: 1; padding: 0 7px 0 8px; }
.thumb { width: 5px; height: 34%; border-radius: 3px; background: #6f6f6f; }
.status { display: flex; height: 37px; background: #373737; }
.part { display: flex; align-items: center; flex: none; }
.info { flex: 1; }
.grip { display: flex; flex-direction: column; width: 10px; height: 37px; padding: 4px 0 2px; justify-content: space-between; flex: none; }
.grip .dots { height: 21px; }
.info .grip { margin-left: 2px; }
.gears { width: 37px; }
.status .drop { height: 34px; }
.small { width: 16px; height: 16px; margin: 0 2px 0 4px; }
.size, .pos { display: grid; grid-template-columns: 14px 6px 61px; line-height: 13px; }
.pos { grid-template-columns: 11px 6px; }
.short { height: 24px; margin: 0 1px; }
.nav { width: 358px; }
.pageno { width: 96px; height: 24px; margin: 0 3px; padding: 0 4px; text-align: right; border: 1px solid #5f5f5f; border-radius: 3px; background: #2f2f2f; color: #999; font: inherit; }
.layout { width: 173px; }
.zoom { width: 278px; }
.zoom .combo { width: 96px; margin: 0 3px; }
.slider { appearance: none; flex: 1; min-width: 0; height: 24px; margin: 0 4px; background: linear-gradient(#7d7d7d, #666) center / 100% 3px no-repeat; }
.slider::-webkit-slider-thumb {
  appearance: none;
  width: 23px;
  height: 23px;
  border: 1px solid #bbb;
  border-radius: 50%;
  background: radial-gradient(circle, #8b8b8b 0 4px, #373737 5px);
}
.more { width: 12px; height: 34px; }
.more svg { width: 9px; height: 11px; }
.last { width: 35px; justify-content: space-between; }
.corner { width: 15px; background: #454545; align-items: flex-start; padding-top: 2px; }
.corner svg { width: 9px; height: 9px; border-bottom: 1px solid #ccc; }
```
